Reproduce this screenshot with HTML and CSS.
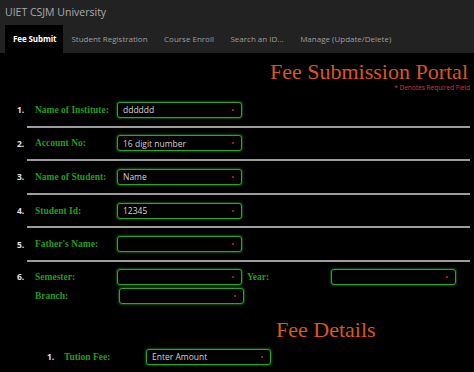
FILE: index.html
```html
<!doctype html>
<html lang="en">
<head>
    <meta charset="UTF-8">
    <title>Fee Submission Portal</title>
    <link rel="stylesheet" href="styles.css">
</head>
<body>
<div class="topbar">
    <div class="brand">UIET CSJM University</div>
    <ul class="nav">
        <li class="active"><a href="#">Fee Submit</a></li>
        <li><a href="#">Student Registration</a></li>
        <li><a href="#">Course Enroll</a></li>
        <li><a href="#">Search an ID...</a></li>
        <li><a href="#">Manage (Update/Delete)</a></li>
    </ul>
</div>

<div class="main">
    <h1 class="portal">Fee Submission Portal</h1>
    <div class="req-note">* Denotes Required Field</div>

    <div class="form">
        <div class="row">
            <span class="num">1.</span>
            <label class="label">Name of Institute:</label>
            <div class="field"><input type="text" value="dddddd"><span class="req"></span></div>
        </div>
        <div class="sep"></div>

        <div class="row">
            <span class="num">2.</span>
            <label class="label">Account No:</label>
            <div class="field"><input type="text" placeholder="16 digit number"><span class="req"></span></div>
        </div>
        <div class="sep"></div>

        <div class="row">
            <span class="num">3.</span>
            <label class="label">Name of Student:</label>
            <div class="field"><input type="text" placeholder="Name"><span class="req"></span></div>
        </div>
        <div class="sep"></div>

        <div class="row">
            <span class="num">4.</span>
            <label class="label">Student Id:</label>
            <div class="field"><input type="text" value="12345"><span class="req"></span></div>
        </div>
        <div class="sep"></div>

        <div class="row">
            <span class="num">5.</span>
            <label class="label">Father's Name:</label>
            <div class="field"><input type="text"><span class="req"></span></div>
        </div>
        <div class="sep"></div>

        <div class="row multi">
            <span class="num">6.</span>
            <div class="stack">
                <div class="line">
                    <label class="label">Semester:</label>
                    <div class="field"><input type="text"><span class="req"></span></div>
                    <label class="label year">Year:</label>
                    <div class="field"><input type="text"><span class="req"></span></div>
                </div>
                <div class="line">
                    <label class="label">Branch:</label>
                    <div class="field shift"><input type="text"><span class="req"></span></div>
                </div>
            </div>
        </div>
    </div>

    <h2 class="fee-title">Fee Details</h2>

    <div class="form fees">
        <div class="row">
            <span class="num">1.</span>
            <label class="label">Tution Fee:</label>
            <div class="field"><input type="text" placeholder="Enter Amount"><span class="req"></span></div>
        </div>
    </div>
</div>
</body>
</html>
```

FILE: styles.css
```css
body {
    margin: 0;
    background-color: #000;
    font-family: "Open Sans", "DejaVu Sans", sans-serif;
    overflow: hidden;
}

.topbar {
    background-color: #222;
}

.brand {
    height: 25px;
    line-height: 25px;
    padding-left: 5px;
    font-size: 10.5px;
    color: #ababab;
}

.nav {
    display: flex;
    list-style-type: none;
    margin: 0;
    padding: 0 0 0 5px;
    height: 28px;
}

.nav li a {
    display: block;
    height: 28px;
    line-height: 28px;
    padding: 0 8.5px 0 8px;
    font-size: 8px;
    color: #9d9d9d;
    text-decoration: none;
}

.nav li.active a {
    background-color: #000;
    color: #fff;
    font-weight: bold;
    padding: 0 7px 0 8px;
    letter-spacing: -0.1px;
}

.portal {
    margin: 8px 6px 0 0;
    text-align: right;
    font-family: "Liberation Serif", serif;
    font-weight: normal;
    font-size: 22px;
    line-height: 22px;
    color: #d9561e;
}

.req-note {
    margin-top: 1px;
    text-align: right;
    padding-right: 4px;
    font-size: 6.5px;
    line-height: 8px;
    color: #d9304a;
}

.form {
    padding-top: 2px;
}

.row {
    display: flex;
    align-items: center;
    padding: 7.8px 0;
    padding-left: 17px;
}

.num {
    width: 18px;
    font-size: 8.5px;
    font-weight: bold;
    color: #e0e0e0;
}

.label {
    width: 82px;
    font-family: "Liberation Serif", serif;
    font-weight: bold;
    font-size: 9.5px;
    color: #249a24;
}

.field {
    display: flex;
    align-items: center;
    box-sizing: border-box;
    width: 125px;
    height: 16px;
    border: 1.5px solid #34a034;
    border-radius: 3px;
    box-shadow: 0 0 2px 1px rgba(30, 150, 30, 0.5);
    background-color: #000;
    padding: 0 7px 0 5px;
}

.field input {
    flex: 1;
    min-width: 0;
    border: none;
    outline: none;
    background: transparent;
    padding: 0;
    font-family: "Open Sans", "DejaVu Sans", sans-serif;
    font-size: 8.5px;
    color: #d8d8d8;
}

.field input::placeholder {
    color: #d0d0d0;
}

.req {
    width: 2px;
    height: 2px;
    border-radius: 50%;
    background-color: #d42020;
}

.sep {
    margin: 0 4px 0 27px;
    border-top: 2px solid #9c9c9c;
}

.row.multi {
    align-items: flex-start;
    padding-top: 7px;
}

.row.multi .num {
    line-height: 16px;
}

.stack {
    display: flex;
    flex-direction: column;
    gap: 3px;
}

.line {
    display: flex;
    align-items: center;
}

.label.year {
    width: 84px;
    margin-left: 5px;
}

.field.shift {
    margin-left: 2px;
}

.fee-title {
    margin: 7px 0 0 0;
    padding-left: 276px;
    font-family: "Liberation Serif", serif;
    font-weight: normal;
    font-size: 22px;
    line-height: 22px;
    color: #d9561e;
}

.form.fees {
    padding-top: 0;
}

.fees .row {
    padding-left: 47px;
}

.fees .num {
    width: 17px;
}
```
